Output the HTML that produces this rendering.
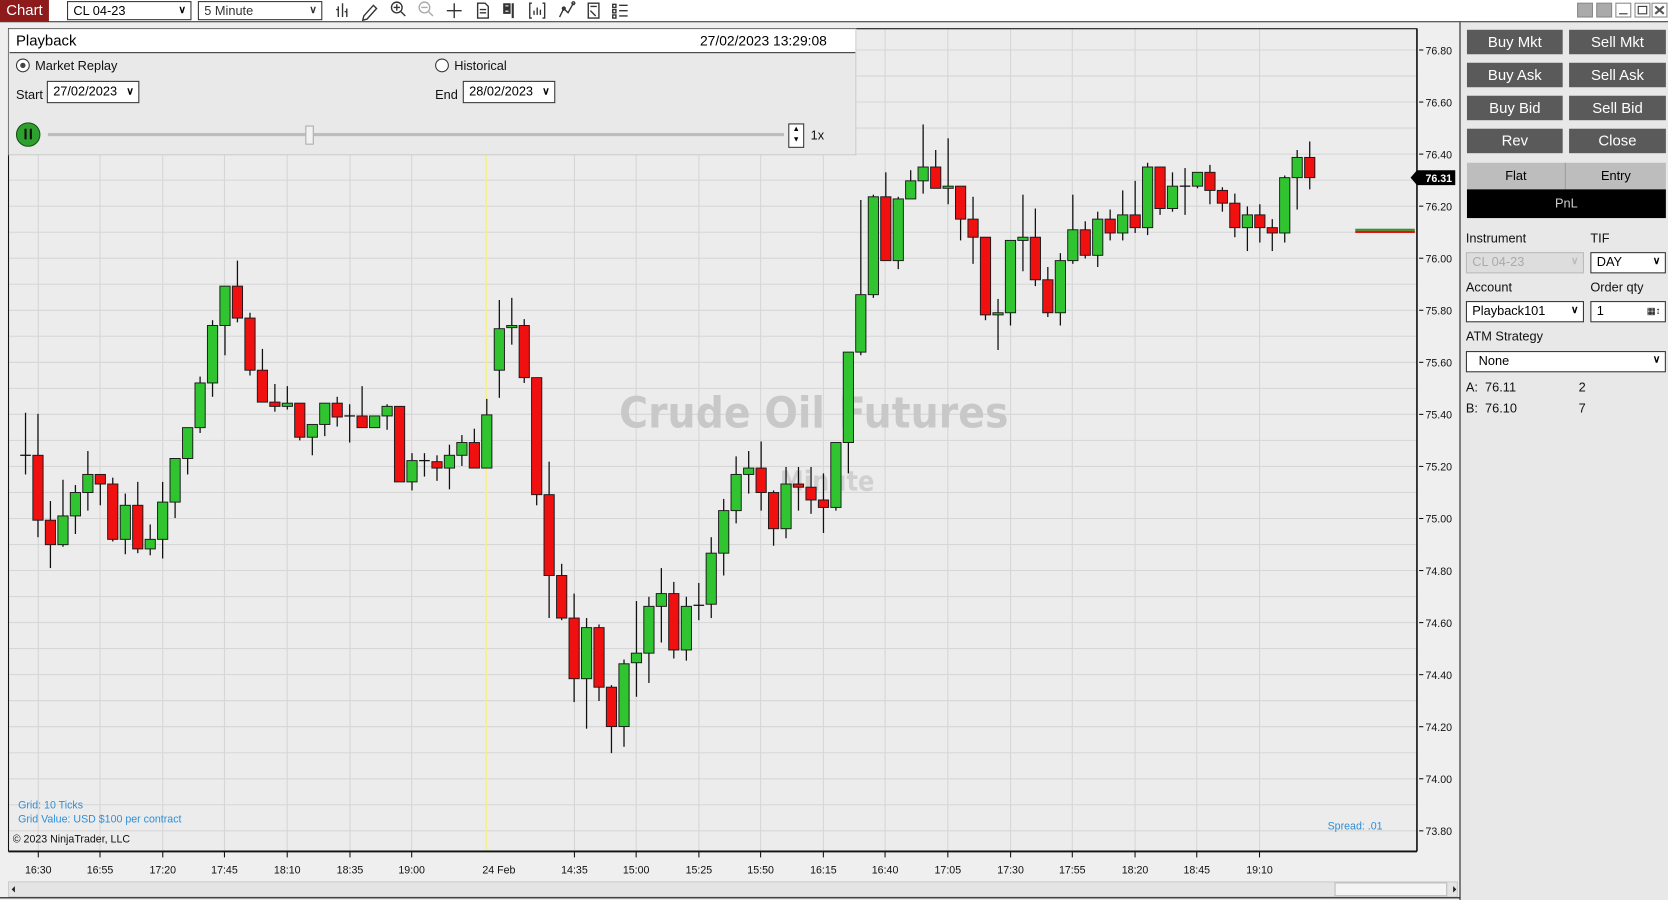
<!DOCTYPE html>
<html><head><meta charset="utf-8">
<style>
html,body{margin:0;padding:0;width:1668px;height:900px;overflow:hidden;background:#fff;font-family:"Liberation Sans",Arial,sans-serif;}
#w{position:absolute;left:0;top:0;width:1568px;height:846px;transform:scale(1.06378);transform-origin:0 0;background:#fff;}
.a{position:absolute;}
.sel{position:absolute;border:1px solid #333;background:#fff;font-size:12px;box-sizing:border-box;padding-left:5px;line-height:16px;}
.sel .v{position:absolute;right:4px;top:0;font-size:10px;font-weight:bold;}
.btn{position:absolute;background:#5a5a5a;color:#fff;font-size:14px;text-align:center;line-height:23px;width:90px;height:23px;}
.lbl{position:absolute;font-size:12px;color:#111;}
</style></head><body><div id="w">
<div class="a" style="left:0;top:0;width:46px;height:20px;background:#8e1b1b;color:#fff;font-size:14px;line-height:19px;text-align:center;">Chart</div>
<div class="sel" style="left:63px;top:1px;width:117px;height:18px;">CL 04-23<span class="v">∨</span></div>
<div class="sel" style="left:186px;top:1px;width:117px;height:18px;color:#333;">5 Minute<span class="v">∨</span></div>
<svg class="a" style="left:312px;top:0" width="290" height="20" fill="none" stroke="#333" stroke-width="1.3">
<path d="M6 6v10M10 3v13M14 8v8M4 9h2M12 11h2" />
<path d="M30 15l9-10 3 3-9 10-4 1z"/>
<circle cx="61" cy="7" r="5"/><path d="M65 11l4 4M58 7h6M61 4v6"/>
<circle cx="87" cy="7" r="5" stroke="#aaa"/><path d="M91 11l4 4M84 7h6" stroke="#aaa"/>
<path d="M115 3v14M108 10h14"/>
<path d="M137 3h7l3 3v11h-10zM139 9h6M139 12h6"/>
<path d="M162 4h5v3h-5zM162 9h5v3h-5zM170 3v14" stroke-width="2"/>
<path d="M188 3h-2v14h2M198 3h2v14h-2M190 14v-4M193 14v-7M196 14v-5"/>
<path d="M214 16l4-8 4 4 5-9"/><circle cx="218" cy="8" r="1.3"/><circle cx="227" cy="3" r="1.3"/>
<path d="M241 3h10v14h-10zM243 6h6M243 10l5 5"/>
<path d="M264 4h3v3h-3zM264 9h3v3h-3zM264 14h3v3h-3zM270 5h8M270 10h8M270 15h8"/>
</svg>
<svg class="a" style="left:1482px;top:2px" width="86" height="16">
<rect x="1" y="1" width="14" height="13" fill="#aaa" stroke="#888"/><rect x="19" y="1" width="14" height="13" fill="#aaa" stroke="#888"/>
<rect x="37" y="1" width="14" height="13" fill="#fff" stroke="#888"/><path d="M40 11h8" stroke="#333"/>
<rect x="55" y="1" width="14" height="13" fill="#fff" stroke="#888"/><rect x="58" y="4" width="8" height="7" fill="none" stroke="#333"/>
<rect x="71" y="1" width="14" height="13" fill="#fff" stroke="#888"/><path d="M74 4l8 7M82 4l-8 7" stroke="#555" stroke-width="2"/>
</svg>
<div class="a" style="left:0;top:20px;width:1568px;height:1px;background:#222"></div>
<div class="a" style="left:0;top:21px;width:1372px;height:825px;background:#efefef"></div>
<div class="a" style="left:1372px;top:21px;width:1px;height:825px;background:#111"></div>
<div class="a" style="left:1373px;top:21px;width:195px;height:825px;background:#e8e8e8"></div>
<svg id="ch" class="a" style="left:0;top:0" width="1372" height="846"></svg>
<div class="a" style="left:8px;top:27px;width:796px;height:118px;background:#e9e9e9;border-right:1px solid #ccc;border-bottom:1px solid #ccc;"></div>
<div class="a" style="left:9px;top:28px;width:795px;height:21px;background:#fff;border-bottom:1px solid #333;"></div>
<div class="a" style="left:15px;top:30px;font-size:14px;">Playback</div>
<div class="a" style="left:658px;top:31px;font-size:13px;">27/02/2023 13:29:08</div>
<div class="a" style="left:15px;top:55px;width:11px;height:11px;border:1px solid #333;border-radius:50%;background:#fff"></div>
<div class="a" style="left:19px;top:59px;width:5px;height:5px;border-radius:50%;background:#444"></div>
<div class="lbl" style="left:33px;top:55px;">Market Replay</div>
<div class="a" style="left:409px;top:55px;width:11px;height:11px;border:1px solid #333;border-radius:50%;background:#fff"></div>
<div class="lbl" style="left:427px;top:55px;">Historical</div>
<div class="lbl" style="left:15px;top:82px;">Start</div>
<div class="sel" style="left:44px;top:76px;width:87px;height:21px;line-height:19px;">27/02/2023<span class="v">∨</span></div>
<div class="lbl" style="left:409px;top:82px;">End</div>
<div class="sel" style="left:435px;top:76px;width:87px;height:21px;line-height:19px;">28/02/2023<span class="v">∨</span></div>
<div class="a" style="left:15px;top:115px;width:23px;height:23px;border-radius:50%;background:#2ea02e;border:1px solid #145214;box-sizing:border-box;"></div>
<div class="a" style="left:23px;top:121px;width:2px;height:10px;background:#111"></div><div class="a" style="left:28px;top:121px;width:2px;height:10px;background:#111"></div>
<div class="a" style="left:45px;top:125px;width:692px;height:3px;background:#bdbdbd"></div>
<div class="a" style="left:287px;top:118px;width:6px;height:16px;background:#f2f2f2;border:1px solid #aaa;"></div>
<div class="a" style="left:741px;top:116px;width:13px;height:21px;border:1px solid #333;background:#fff;font-size:7px;line-height:10px;text-align:center;">▲<br>▼</div>
<div class="lbl" style="left:762px;top:120px;">1x</div>
<div class="btn" style="left:1379px;top:28px">Buy Mkt</div><div class="btn" style="left:1475px;top:28px;width:91px">Sell Mkt</div>
<div class="btn" style="left:1379px;top:59px">Buy Ask</div><div class="btn" style="left:1475px;top:59px;width:91px">Sell Ask</div>
<div class="btn" style="left:1379px;top:90px">Buy Bid</div><div class="btn" style="left:1475px;top:90px;width:91px">Sell Bid</div>
<div class="btn" style="left:1379px;top:121px">Rev</div><div class="btn" style="left:1475px;top:121px;width:91px">Close</div>
<div class="a" style="left:1379px;top:153px;width:92px;height:25px;background:#bdbdbd;font-size:12px;text-align:center;line-height:25px;border-right:1px solid #999;">Flat</div>
<div class="a" style="left:1472px;top:153px;width:94px;height:25px;background:#bdbdbd;font-size:12px;text-align:center;line-height:25px;">Entry</div>
<div class="a" style="left:1379px;top:178px;width:187px;height:27px;background:#000;color:#ccc;font-size:12px;text-align:center;line-height:26px;">PnL</div>
<div class="lbl" style="left:1378px;top:217px;">Instrument</div><div class="lbl" style="left:1495px;top:217px;">TIF</div>
<div class="sel" style="left:1378px;top:237px;width:111px;height:20px;background:#ddd;border-color:#bbb;color:#aaa;">CL 04-23<span class="v" style="color:#bbb">∨</span></div>
<div class="sel" style="left:1495px;top:237px;width:71px;height:20px;">DAY<span class="v">∨</span></div>
<div class="lbl" style="left:1378px;top:263px;">Account</div><div class="lbl" style="left:1495px;top:263px;">Order qty</div>
<div class="sel" style="left:1378px;top:283px;width:111px;height:20px;">Playback101<span class="v">∨</span></div>
<div class="sel" style="left:1495px;top:283px;width:71px;height:20px;">1<span class="v" style="font-size:9px;font-weight:normal">▦↕</span></div>
<div class="lbl" style="left:1378px;top:309px;">ATM Strategy</div>
<div class="sel" style="left:1378px;top:330px;width:188px;height:20px;padding-left:11px;">None<span class="v">∨</span></div>
<div class="lbl" style="left:1378px;top:357px;">A:&nbsp; 76.11</div><div class="lbl" style="left:1484px;top:357px;">2</div>
<div class="lbl" style="left:1378px;top:377px;">B:&nbsp; 76.10</div><div class="lbl" style="left:1484px;top:377px;">7</div>
</div>
<script>
var s=document.getElementById('ch'),h='';
function Y(p){return 47+(76.8-p)*244.67;}
h+='<rect x="8" y="27" width="1324" height="773" fill="#ececec"/>';
for(var p=73.7;p<=76.95;p+=0.1){var y=Y(p);if(y>27&&y<800)h+='<line x1="8" x2="1332" y1="'+y.toFixed(1)+'" y2="'+y.toFixed(1)+'" stroke="#d6d6d6"/>';}
var vx=[36,94,153,211,270,329,387,540,598,657,715,774,832,891,950,1008,1067,1125,1184];
vx.forEach(function(x){h+='<line x1="'+x+'" x2="'+x+'" y1="27" y2="800" stroke="#d6d6d6"/>';});
h+='<line x1="457" x2="457" y1="145" y2="800" stroke="#f4f08a" stroke-width="1.5"/>';
h+='<text x="582" y="402" font-family="DejaVu Sans,sans-serif" font-weight="bold" font-size="40" fill="#c8c8c8" textLength="366" lengthAdjust="spacingAndGlyphs">Crude Oil Futures</text>';
h+='<text x="733" y="461" font-family="DejaVu Sans,sans-serif" font-weight="bold" font-size="26" fill="#d0d0d0" textLength="89" lengthAdjust="spacingAndGlyphs">Minute</text>';
var d=[[428,428,388,446],[428,489,389,505],[489,512,471,534],[512,485,451,514],[485,463,456,502],[463,446,424,480],[446,455,446,475],[455,507,449,509],[507,475,464,521],[475,516,453,520],[516,507,493,522],[507,472,453,525],[472,431,431,487],[431,402,402,446],[402,360,354,407],[360,306,301,373],[306,269,269,334],[269,299,245,303],[299,348,294,353],[348,378,328,378],[378,382,361,387],[382,379,363,385],[379,411,379,414],[411,399,399,428],[399,379,379,410],[379,392,373,401],[391,391,380,416],[391,402,363,402],[402,391,391,402],[391,382,380,404],[382,453,382,453],[453,433,426,461],[433,433,426,448],[434,440,428,452],[440,428,418,460],[428,416,409,438],[416,440,403,440],[440,390,375,440],[348,309,282,374],[308,306,280,324],[306,355,300,360],[355,465,355,475],[465,541,434,581],[541,581,530,583],[581,638,558,660],[638,590,581,685],[590,646,587,659],[646,683,644,708],[683,624,620,702],[623,614,565,655],[614,570,561,642],[570,558,534,604],[558,611,547,619],[611,570,561,621],[569,569,548,583],[568,520,505,581],[520,480,469,541],[480,446,429,492],[446,440,424,464],[440,463,415,480],[463,497,461,513],[497,455,439,506],[455,458,439,480],[458,470,439,483],[470,477,445,501],[477,416,416,480],[416,331,331,445],[331,277,188,334],[277,185,183,280],[185,245,162,245],[245,187,185,253],[187,170,160,187],[170,157,117,182],[157,177,141,177],[177,175,130,192],[175,206,175,226],[206,223,185,248],[223,296,223,301],[296,294,281,329],[294,226,226,306],[226,223,183,255],[223,263,196,269],[263,294,251,298],[294,245,238,306],[245,216,183,248],[216,240,208,243],[240,206,199,251],[206,219,197,226],[219,202,179,226],[202,214,170,219],[214,157,153,221],[157,196,157,202],[196,175,162,199],[175,175,158,202],[175,162,162,177],[162,179,155,192],[179,191,176,199],[191,214,182,223],[214,202,194,236],[202,214,192,228],[214,219,206,236],[219,167,165,228],[167,148,141,197],[148,167,133,178]];
d.forEach(function(c,i){var x=24+11.72*i,o=c[0],cl=c[1],t=Math.min(o,cl),b=Math.max(o,cl),g=cl<o;
h+='<line x1="'+x.toFixed(1)+'" x2="'+x.toFixed(1)+'" y1="'+c[2]+'" y2="'+c[3]+'" stroke="#111" stroke-width="1.2"/>';
if(b-t<1.5){ if(o==cl) h+='<line x1="'+(x-5).toFixed(1)+'" x2="'+(x+5).toFixed(1)+'" y1="'+o+'" y2="'+o+'" stroke="#111" stroke-width="1.2"/>'; else h+='<rect x="'+(x-4.8).toFixed(1)+'" y="'+t+'" width="9.6" height="2.5" fill="'+(g?'#2fc42f':'#ee1111')+'" stroke="#222" stroke-width="0.8"/>';}
else h+='<rect x="'+(x-4.8).toFixed(1)+'" y="'+t+'" width="9.6" height="'+(b-t)+'" fill="'+(g?'#30c530':'#f01010')+'" stroke="#1a1a1a" stroke-width="0.9"/>';});
h+='<rect x="1274" y="215" width="56" height="2" fill="#2a9a2a"/><rect x="1274" y="217" width="56" height="2" fill="#e01010"/>';
h+='<text x="17" y="760" font-size="10" fill="#2f8fd6">Grid: 10 Ticks</text><text x="17" y="773" font-size="10" fill="#2f8fd6">Grid Value: USD $100 per contract</text>';
h+='<text x="1248" y="780" font-size="10" fill="#2f8fd6">Spread: .01</text>';
h+='<text x="12" y="792" font-size="10" fill="#111">© 2023 NinjaTrader, LLC</text>';
h+='<rect x="8" y="27" width="1324" height="773" fill="none" stroke="#111"/>';
h+='<line x1="1332" x2="1332" y1="27" y2="800" stroke="#111" stroke-width="1.5"/><line x1="8" x2="1332" y1="800.5" y2="800.5" stroke="#111" stroke-width="1.5"/>';
for(var k=0;k<=15;k++){var pv=76.8-k*0.2,yy=Y(pv);h+='<line x1="1334" x2="1338" y1="'+yy+'" y2="'+yy+'" stroke="#111"/><text x="1340" y="'+(yy+4)+'" font-size="10" fill="#111">'+pv.toFixed(2)+'</text>';}
h+='<path d="M1326 167l6-7h36v14h-36z" fill="#000"/><text x="1340" y="171" font-size="10" font-weight="bold" fill="#fff">76.31</text>';
var tl=['16:30','16:55','17:20','17:45','18:10','18:35','19:00','24 Feb','14:35','15:00','15:25','15:50','16:15','16:40','17:05','17:30','17:55','18:20','18:45','19:10'];
var tx=[36,94,153,211,270,329,387,469,540,598,657,715,774,832,891,950,1008,1067,1125,1184];
tl.forEach(function(t,i){var x=tx[i];if(t!='24 Feb')h+='<line x1="'+x+'" x2="'+x+'" y1="801" y2="806" stroke="#111"/>';h+='<text x="'+x+'" y="821" font-size="10" text-anchor="middle" fill="#111">'+t+'</text>';});
h+='<rect x="8" y="829" width="1362" height="14" fill="#e4e4e4" stroke="#ccc"/><rect x="1255" y="830" width="105" height="12" fill="#f4f4f4" stroke="#bbb"/>';
h+='<path d="M11 836l3-3v6z M1366 833l3 3-3 3z" fill="#222"/>';
h+='<line x1="0" x2="1372" y1="844" y2="844" stroke="#111"/>';
s.innerHTML=h;
</script>
</body></html>
